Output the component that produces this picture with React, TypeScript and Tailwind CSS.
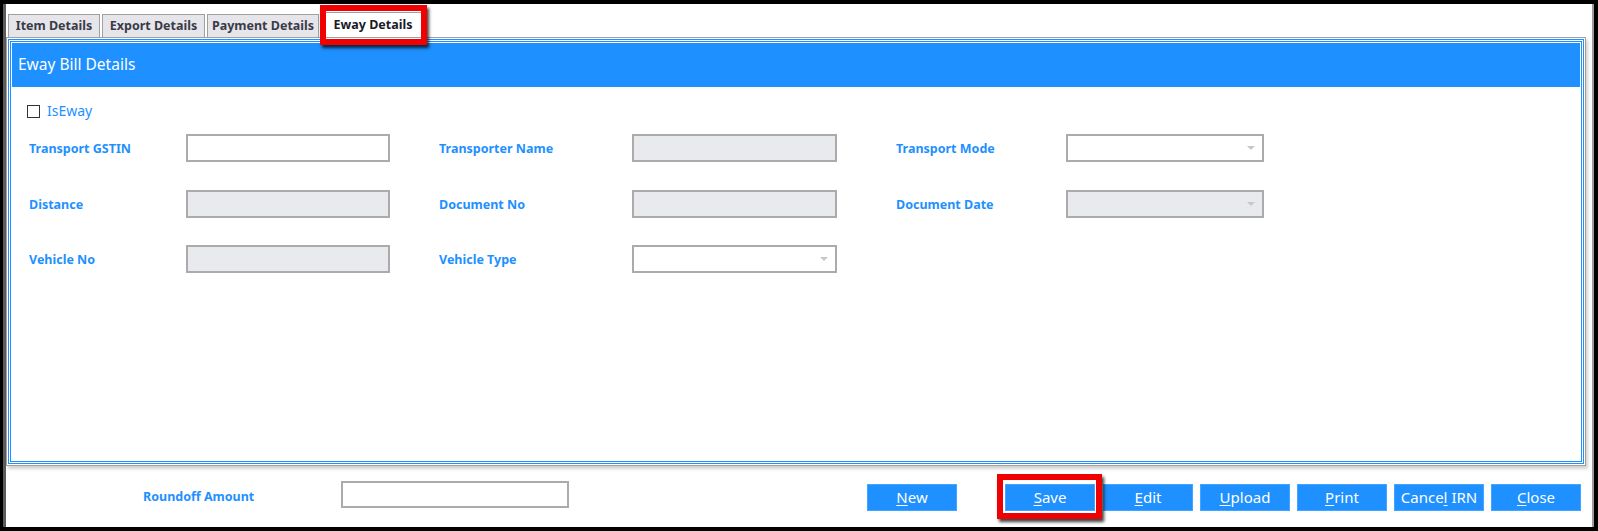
import React from "react";

const Label = ({ children, className = "" }: { children: React.ReactNode; className?: string }) => (
  <div className={`text-[12.5px] font-bold text-[#1e90ff] leading-none pt-[3px] ${className}`}>{children}</div>
);

const Input = ({ w, disabled, select }: { w: string; disabled?: boolean; select?: boolean }) => (
  <div
    className={`${w} h-[28px] border-2 border-[#ababab] flex items-center justify-end pr-[7px] ${
      disabled ? "bg-[#e9eaed]" : "bg-white"
    }`}
  >
    {select && <div className="w-0 h-0 border-l-[4px] border-r-[4px] border-t-[4px] border-l-transparent border-r-transparent border-t-[#c8c8c8]" />}
  </div>
);

const Btn = ({ u, rest, className = "", children }: { u: string; rest: string; className?: string; children?: React.ReactNode }) => (
  <div
    className={`relative w-[90px] h-[27px] bg-[#1e90ff] border border-[#42a5ff] text-white text-[15px] leading-none flex items-center justify-center ${className}`}
  >
    <span>
      <u className="underline-offset-2">{u}</u>
      {rest}
    </span>
    {children}
  </div>
);

const Tab = ({ label, w, className = "" }: { label: string; w: string; className?: string }) => (
  <div
    className={`${w} h-[23px] bg-[#e6e6ea] border-t border-l border-r border-[#a0a0a0] text-[12.5px] font-bold text-[#3a3a48] flex items-center justify-center ${className}`}
  >
    {label}
  </div>
);

export default function App() {
  return (
    <div className="w-[1598px] h-[531px] bg-black pt-[4px] pl-[3px] font-['Noto_Sans',sans-serif] overflow-hidden">
      <div className="w-[1591px] h-[523px] bg-white border-l-[3px] border-l-[#5c5c5c] border-r-2 border-r-[#9c9c9c] flex flex-col">
        {/* Tabs */}
        <div className="flex items-end h-[33px] pt-[8px] pl-[2px]">
          <Tab label="Item Details" w="w-[92px]" />
          <Tab label="Export Details" w="w-[103px]" className="ml-[2px]" />
          <Tab label="Payment Details" w="w-[112px]" className="ml-[2px]" />
          <div className="relative ml-[1px] w-[104px] h-[25px] bg-white border-t border-l border-r border-[#a0a0a0] text-[12.5px] font-bold text-[#1a1a28] flex items-center justify-center pl-[2px]">
            Eway Details
            <div className="absolute z-10 -left-[1px] -top-[8px] -right-[4px] -bottom-[8px] border-[6px] border-[#f00000] shadow-[2px_3px_3px_rgba(0,0,0,0.75)]" />
          </div>
        </div>

        {/* Panel */}
        <div className="w-[1580px] h-[429px] border border-[#a0a0a0] p-px shadow-[2px_3px_3px_rgba(0,0,0,0.18)]">
          <div className="h-full border border-[#1e90ff] p-px">
            <div className="h-full border border-[#1e90ff] p-px flex flex-col">
              <div className="h-[44px] bg-[#1e90ff] text-white text-[15.5px] pl-[6px] flex items-center">Eway Bill Details</div>

              <div className="mt-[15px] ml-[15px] h-[18px] flex items-center">
                <div className="w-[13px] h-[13px] border border-[#333] bg-white" />
                <span className="ml-[7px] text-[14px] text-[#1e90ff] leading-none">IsEway</span>
              </div>

              <div className="ml-[17px] mt-[14px] flex items-center">
                <Label className="w-[157px]">Transport GSTIN</Label>
                <Input w="w-[204px]" />
                <Label className="ml-[49px] w-[193px]">Transporter Name</Label>
                <Input w="w-[205px]" disabled />
                <Label className="ml-[59px] w-[170px]">Transport Mode</Label>
                <Input w="w-[198px]" select />
              </div>

              <div className="ml-[17px] mt-[28px] flex items-center">
                <Label className="w-[157px]">Distance</Label>
                <Input w="w-[204px]" disabled />
                <Label className="ml-[49px] w-[193px]">Document No</Label>
                <Input w="w-[205px]" disabled />
                <Label className="ml-[59px] w-[170px]">Document Date</Label>
                <Input w="w-[198px]" disabled select />
              </div>

              <div className="ml-[17px] mt-[27px] flex items-center">
                <Label className="w-[157px]">Vehicle No</Label>
                <Input w="w-[204px]" disabled />
                <Label className="ml-[49px] w-[193px]">Vehicle Type</Label>
                <Input w="w-[205px]" select />
              </div>
            </div>
          </div>
        </div>

        {/* Bottom bar */}
        <div className="flex items-start">
          <Label className="ml-[137px] mt-[22px] w-[198px]">Roundoff Amount</Label>
          <div className="mt-[15px] w-[228px] h-[27px] border-2 border-[#ababab] bg-white" />
          <Btn u="N" rest="ew" className="ml-[298px] mt-[18px]" />
          <Btn u="S" rest="ave" className="ml-[48px] mt-[18px]">
            <div className="absolute z-10 -left-[9px] -top-[11px] -right-[8px] -bottom-[9px] border-[6px] border-[#f00000] shadow-[2px_3px_3px_rgba(0,0,0,0.75)]" />
          </Btn>
          <Btn u="E" rest="dit" className="ml-[8px] mt-[18px] w-[89px]" />
          <Btn u="U" rest="pload" className="ml-[7px] mt-[18px]" />
          <Btn u="P" rest="rint" className="ml-[7px] mt-[18px]" />
          <div className="relative ml-[7px] mt-[18px] w-[90px] h-[27px] bg-[#1e90ff] border border-[#42a5ff] text-white text-[15px] leading-none flex items-center justify-center">
            <span>
              Cance<u className="underline-offset-2">l</u> IRN
            </span>
          </div>
          <Btn u="C" rest="lose" className="ml-[7px] mt-[18px]" />
        </div>
      </div>
    </div>
  );
}
